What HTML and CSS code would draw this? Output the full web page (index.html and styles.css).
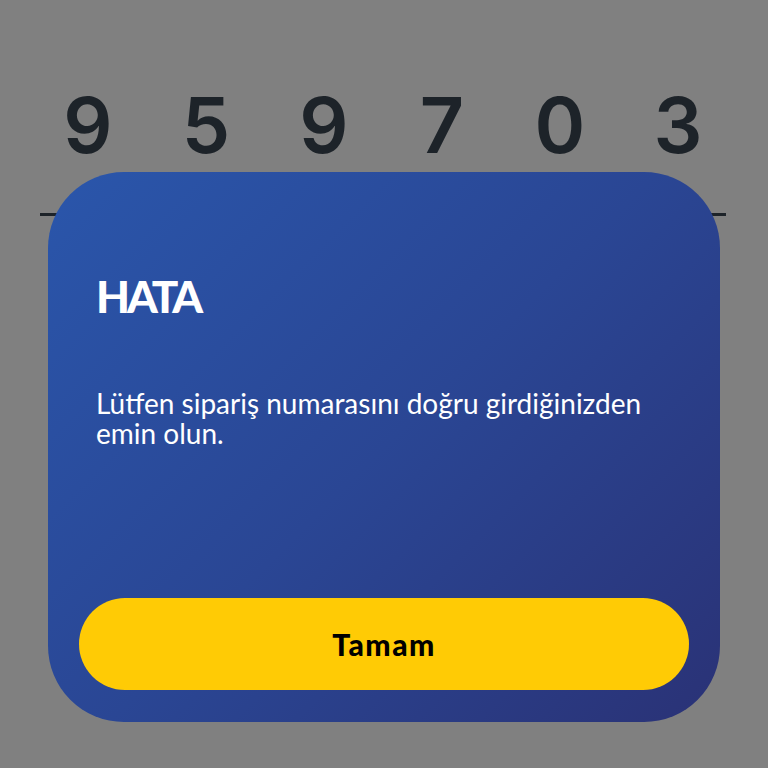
FILE: index.html
```html
<!DOCTYPE html>
<html lang="tr">
<head>
<meta charset="utf-8">
<link rel="stylesheet" href="styles.css">
</head>
<body>
<div class="screen">
  <div class="code-row">
    <div class="cell">9</div>
    <div class="cell">5</div>
    <div class="cell">9</div>
    <div class="cell">7</div>
    <div class="cell">0</div>
    <div class="cell">3</div>
  </div>
  <div class="dialog">
    <h1 class="title">HATA</h1>
    <p class="message">Lütfen sipariş numarasını doğru girdiğinizden emin olun.</p>
    <button class="btn">Tamam</button>
  </div>
</div>
</body>
</html>
```
FILE: styles.css
```css
html, body {
  margin: 0;
  padding: 0;
  background: #808080;
}
.screen {
  position: relative;
  width: 768px;
  height: 768px;
  overflow: hidden;
  font-family: "Lato", "Noto Sans", sans-serif;
}
.code-row {
  display: flex;
  gap: 22px;
  padding: 80px 0 0 40px;
}
.cell {
  width: 96px;
  height: 136px;
  box-sizing: border-box;
  border-bottom: 3px solid #1d2329;
  text-align: center;
  font-family: "Inter", "Lato", sans-serif;
  font-weight: 600;
  font-size: 77px;
  line-height: 90px;
  color: #1d2329;
}
.dialog {
  position: absolute;
  left: 48px;
  top: 172px;
  width: 672px;
  height: 550px;
  box-sizing: border-box;
  border-radius: 76px;
  background: linear-gradient(135deg, #2a56ab 0%, #2a4694 50%, #2a3276 100%);
  display: flex;
  flex-direction: column;
  padding: 98px 31px 32px;
}
.title {
  margin: 0 0 0 17px;
  font-family: "Lato", sans-serif;
  font-weight: 900;
  font-size: 44px;
  line-height: 52px;
  color: #ffffff;
  letter-spacing: -3px;
}
.message {
  margin: 66px 0 0 17px;
  font-size: 28px;
  line-height: 30px;
  color: #ffffff;
}
.btn {
  margin-top: auto;
  height: 92px;
  border: none;
  border-radius: 46px;
  background: #ffcb05;
  color: #000;
  font-family: "Lato", sans-serif;
  font-weight: 900;
  font-size: 30px;
  letter-spacing: 1.5px;
}
```
